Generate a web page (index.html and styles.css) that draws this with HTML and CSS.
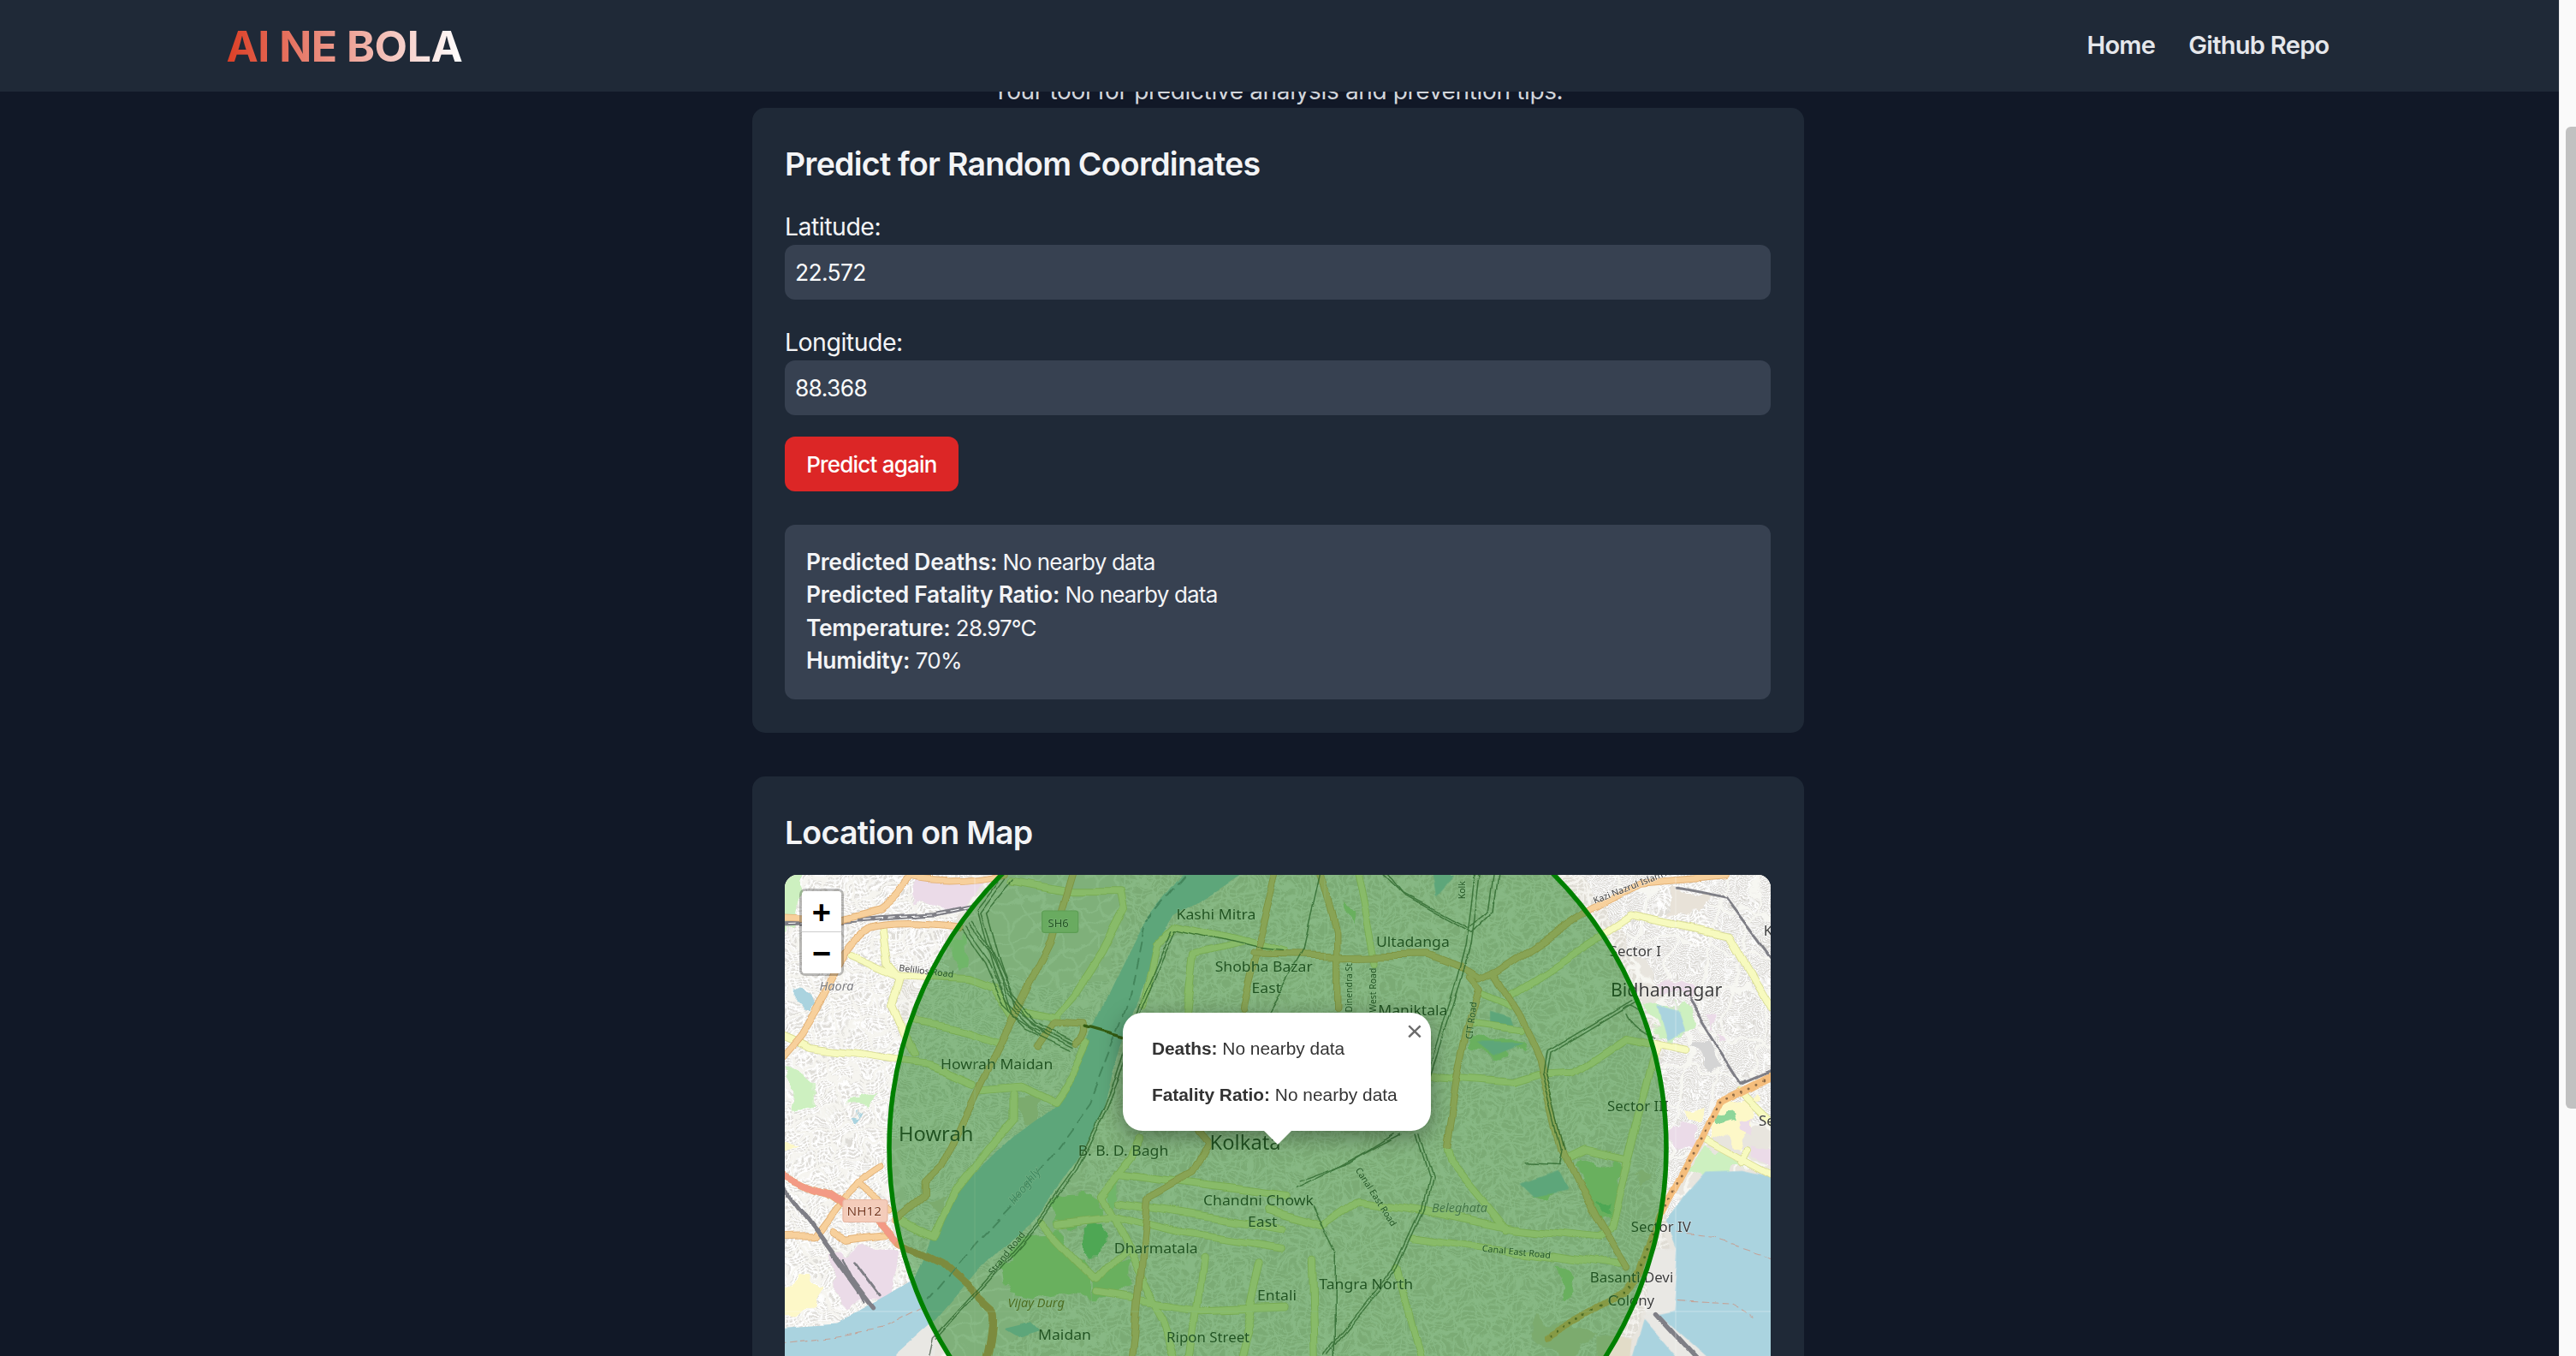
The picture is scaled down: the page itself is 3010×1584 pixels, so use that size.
FILE: index.html
```html
<!DOCTYPE html>
<html lang="en">
<head>
<meta charset="utf-8">
<title>AI NE BOLA</title>
<link rel="stylesheet" href="styles.css">
</head>
<body>
<div class="page">
  <nav class="nav">
    <div class="nav-inner">
      <a class="logo">AI NE BOLA</a>
      <div class="links"><a>Home</a><a>Github Repo</a></div>
    </div>
  </nav>
  <main class="main">
    <p class="subtitle">Your tool for predictive analysis and prevention tips.</p>
    <section class="card">
      <h2>Predict for Random Coordinates</h2>
      <form class="form">
        <label>Latitude:</label>
        <input type="text" value="22.572">
        <label class="second">Longitude:</label>
        <input type="text" value="88.368">
        <button type="button">Predict again</button>
      </form>
      <div class="results">
        <div><strong>Predicted Deaths:</strong> No nearby data</div>
        <div><strong>Predicted Fatality Ratio:</strong> No nearby data</div>
        <div><strong>Temperature:</strong> 28.97°C</div>
        <div><strong>Humidity:</strong> 70%</div>
      </div>
    </section>
    <section class="card">
      <h2>Location on Map</h2>
      <div class="map">
        <svg class="tiles" width="1152" height="800" viewBox="917 1022 1152 800" xmlns="http://www.w3.org/2000/svg">
          <defs>
            <filter id="wob" x="-5%" y="-5%" width="110%" height="110%"><feTurbulence type="fractalNoise" baseFrequency=".03" numOctaves="3" seed="4"/><feDisplacementMap in="SourceGraphic" scale="34" xChannelSelector="R" yChannelSelector="G"/></filter>
            <filter id="wob2" x="-5%" y="-5%" width="110%" height="110%"><feTurbulence type="fractalNoise" baseFrequency=".012" numOctaves="2" seed="9"/><feDisplacementMap in="SourceGraphic" scale="16" xChannelSelector="R" yChannelSelector="G"/></filter>
            <pattern id="st1" width="34" height="24" patternUnits="userSpaceOnUse" patternTransform="rotate(-18)"><rect width="34" height="24" fill="#dedcd7"/><path d="M0 4H34M0 16H34M9 0V24M26 0V24" stroke="#fff" stroke-width="5" fill="none"/></pattern>
            <pattern id="st2" width="28" height="20" patternUnits="userSpaceOnUse" patternTransform="rotate(12)"><rect width="28" height="20" fill="#dddbd4"/><path d="M0 5H28M0 15H28M14 0V20" stroke="#f8f8f5" stroke-width="4" fill="none"/></pattern>
            <pattern id="st3" width="60" height="14" patternUnits="userSpaceOnUse" patternTransform="rotate(14)"><rect width="60" height="14" fill="#d8d6d1"/><path d="M0 3H60M0 10H60M30 0V14" stroke="#fff" stroke-width="3.5" fill="none"/></pattern>
            <pattern id="st4" width="46" height="34" patternUnits="userSpaceOnUse" patternTransform="rotate(8)"><rect width="46" height="34" fill="#e0ddd5"/><path d="M0 8H46M0 26H46M14 0V34M36 0V34" stroke="#f8f7f3" stroke-width="4" fill="none"/></pattern>
            <pattern id="st5" width="150" height="104" patternUnits="userSpaceOnUse" patternTransform="rotate(-24)"><path d="M0 20H150M0 72H150M40 0V104M112 0V104" stroke="#f6f5f0" stroke-width="8" fill="none"/></pattern>
            <pattern id="st6" width="210" height="130" patternUnits="userSpaceOnUse" patternTransform="rotate(11)"><path d="M0 30H210M70 0V130M170 0V130" stroke="#f7f7f2" stroke-width="10" fill="none"/></pattern>
            <g id="primary4">
              <path d="M-60 188 L220 200 L340 170 Q400 130 430 66 Q560 95 720 58"/>
              <path d="M570 225 Q400 200 300 225 Q260 250 230 300 L160 440 L90 560 L-60 740"/>
              <path d="M-60 1195 L130 1190 L175 1130 L225 1060 Q280 1000 330 970"/>
              <path d="M270 1030 L370 1110 M185 1170 L230 1200 L360 1185"/>
              <path d="M930 20 L860 260 L740 510 L640 720 L520 980 L470 1030 L470 1070 L390 1140"/>
              <path d="M820 600 L870 525 L965 530 Q975 570 940 590"/>
              <path d="M1550 20 L1440 480"/>
              <path d="M1300 850 L1340 900 L1290 1000 L1150 1080 L1130 1300 L1090 1700"/>
            </g>
            <g id="secondary4">
              <path d="M345 225 L360 330 L400 380 L375 470 L410 560 L440 620"/>
              <path d="M250 305 L390 370 L600 380 L680 410 L740 510"/>
              <path d="M-60 520 L120 600 L280 620 L400 640 L480 650 L620 710"/>
              <path d="M440 515 L600 550 L700 585 M780 490 L880 510"/>
              <path d="M740 80 L920 115 L1070 115 L1080 170 L1010 310 L930 440 L880 500"/>
              <path d="M750 740 L750 820 L700 880 L560 1060 L500 1190 L400 1140"/>
              <path d="M640 730 L770 720 L870 770 L930 680 L970 590"/>
              <path d="M1140 470 L1180 280 L1240 220 L1568 300"/>
              <path d="M1280 480 L1300 310 L1450 270"/>
              <path d="M880 1150 L1040 1130 L1240 1180 L1568 1230"/>
              <path d="M1040 1130 L1010 1070 L1100 950 L1130 880"/>
              <path d="M1040 1130 L1120 1300 L1200 1450 L1270 1700"/>
              <path d="M1060 1000 L1568 1070 M1060 1090 L1568 1170"/>
              <path d="M830 1150 L930 1260 L1000 1330 L1080 1240"/>
              <path d="M1000 1370 L1320 1420 L1568 1410"/>
              <path d="M1320 1260 L1270 1700 M1500 1280 L1400 1700"/>
            </g>
            <g id="primary5">
              <path d="M1350 62 L1090 85 L940 160 L650 360 L600 385 L540 350 L440 310 L160 315 L-100 310"/>
              <path d="M640 365 L720 500 L780 640 L850 920 L950 1130 L1050 1300"/>
              <path d="M570 385 L600 420 L560 560 L530 700 L500 910"/>
              <path d="M100 20 L160 240 L160 480"/>
            </g>
            <g id="secondary5">
              <path d="M690 430 L980 240 L1060 185 L1360 250 L1560 600"/>
              <path d="M600 430 L690 470 M580 530 L720 550"/>
              <path d="M450 690 L700 710 L780 685 L880 680 L1040 570 L1230 610"/>
              <path d="M860 945 L920 915 L1050 945 L1100 770 L1140 600"/>
              <path d="M1050 945 L1000 1170 L960 1200 L700 1170 L420 1110 L230 1080 L120 1160 L-50 1110"/>
              <path d="M400 1200 L1030 1290"/>
              <path d="M500 920 L510 960 L680 1170"/>
              <path d="M225 20 L260 200 L285 330"/>
              <path d="M1290 890 L1560 1040 M1400 730 L1560 890 M1420 920 L1400 960"/>
              <path d="M90 1260 L100 1700 M350 1290 L450 1700"/>
            </g>
          </defs>
          <rect class="land" x="917" y="1022" width="1152" height="800"/>

          <g class="soft">
            <g filter="url(#wob)">
              <g transform="translate(900 1000) scale(.3827 .3724)">
                <path fill="url(#st1)" d="M-80 -40H640L360 900L380 1250L-80 1250Z"/>
                <path fill="url(#st2)" d="M390 400H1080L780 1300L400 1300Z"/>
                <path fill="url(#st4)" d="M1100 -40H1568V1800H500L900 1300Z"/>
                <path fill="url(#st1)" d="M-80 1240H500V1800H-80Z"/>
                <path fill="url(#st5)" d="M-80 -40H1568V1800H-80Z"/>
                <path class="pink" d="M440 70 L680 70 L580 160 L440 150Z"/>
                <path class="pink" d="M180 1250 L320 1220 L400 1260 L360 1400 L220 1400Z"/>
                <path class="park-l" d="M-40 40H110L70 230H-40Z"/>
                <path class="park-l" d="M60 660L130 690L130 780L70 800Z"/>
                <path class="park-l" d="M240 760L330 730L300 800Z"/>
                <path class="pale" d="M-40 860L80 920L-40 980Z"/>
                <path class="pale" d="M-40 1320L160 1340L140 1440L-40 1440Z"/>
                <path class="water" d="M80 430L130 440L110 500L80 480Z"/>
                <path class="water" d="M255 805L280 815L265 840Z"/>
                <path class="park-m" d="M700 1280 L760 1190 L880 1170 L980 1310 L1000 1370 L860 1400 L720 1370Z"/>
                <path class="park-d" d="M950 1170 L1015 1150 L1005 1250 L960 1250Z"/>
                <path class="park-m" d="M860 1070 L960 1060 L1030 1130 L930 1160 L870 1150Z"/>
                <ellipse class="park-l" cx="1040" cy="1060" rx="25" ry="45"/>
                <path class="park-m" d="M1000 1310L1090 1280L1085 1370L1000 1370Z"/>
                <path class="park-l" d="M560 280L600 260L600 340L570 350Z"/>
                <path class="sand" d="M760 760L860 760L810 850L760 840Z"/>
                <path class="sand" d="M490 1080L540 1070L520 1130Z"/>
              </g>
              <g transform="translate(1500 1000) scale(.3827 .3724)">
                <path fill="url(#st4)" d="M0 -40H920L1170 600L1150 1400L800 1800H0Z"/>
                <path fill="url(#st5)" d="M0 -40H1000V1800H0Z"/>
                <path fill="url(#st3)" d="M820 -40H1600V800L1250 900L1190 1150H1140L1150 400Z"/>
                <path fill="url(#st6)" d="M1000 -40H1600V900L1200 1150H1140Z"/>
                <path fill="url(#st1)" d="M1130 40L1300 40L1300 300L1130 200Z"/>
                <path class="beige" d="M1165 115L1300 130L1280 190L1165 170Z"/>
                <path class="pink" d="M1130 375L1270 410L1250 440L1130 410Z"/>
                <path class="pink" d="M1290 490L1330 510L1300 540Z"/>
                <path class="pink" d="M1330 550L1365 570L1340 590Z"/>
                <path class="gray" d="M1235 605L1290 575L1350 650L1290 675Z"/>
                <path class="pale" d="M1320 780L1420 760L1440 840L1390 920L1300 880Z"/>
                <path class="pink" d="M1400 840L1440 830L1430 870Z"/>
                <path class="pink" d="M1420 900L1560 950V1000L1410 945Z"/>
                <path class="park-d" d="M1320 830L1375 815L1385 845L1335 860Z"/>
                <path class="pink" d="M1190 860L1260 850L1240 920L1190 900Z"/>
                <path class="pale" d="M1230 790L1290 770L1270 830L1240 830Z"/>
                <path class="park-l" d="M1110 470L1220 450L1260 550L1150 590Z"/>
                <path class="park-l" d="M1280 900L1400 970L1290 1010L1240 990Z"/>
                <path class="park-m" d="M900 980L1040 950L1000 1160L950 1120Z"/>
                <path class="park-d" d="M950 1090L1000 1060L990 1125Z"/>
                <path class="park-m" d="M760 1060L850 1050L800 1090Z"/>
                <path class="park-m" d="M580 550L730 590L660 630L580 610Z"/>
                <path class="park-m" d="M190 130L230 170L220 210L195 170Z"/>
                <path class="sand" d="M1050 1010L1120 1000L1100 1060Z"/>
                <path class="sand" d="M780 1440L960 1490L830 1600L760 1520Z"/>
                <path class="park-m" d="M840 1310L900 1320L860 1380Z"/>
              </g>
            </g>
            <g filter="url(#wob2)">
              <g transform="translate(900 1000) scale(.3827 .3724)">
                <path class="water" d="M1290 20 L1130 230 L1040 420 L990 540 L930 700 L860 790 L740 880 L600 1020 L500 1170 L440 1330 L360 1380 L200 1470 L-80 1490 L-80 1800 L470 1800 L500 1460 L640 1290 L700 1230 L830 1120 L940 960 L1020 800 L1075 600 L1120 470 L1170 300 L1240 180 L1480 20Z"/>
                <path class="water" d="M710 1480L790 1460L820 1490L760 1510Z"/>
                <path class="built" d="M380 1568L520 1440L480 1800L370 1800Z"/>
              </g>
              <g transform="translate(1500 1000) scale(.3827 .3724)">
                <path class="built" d="M1120 1240H1215L1195 1430L1100 1440Z"/>
                <path class="water" d="M1600 1030L1400 985L1290 990L1230 1060L1170 1150L1205 1240L1190 1420L1100 1440L1000 1800L1600 1800Z"/>
                <path class="built" d="M1090 1440L1130 1425L1300 1580L1240 1620Z"/>
                <path class="sand" d="M960 1520L1060 1520L1050 1620L960 1620Z"/>
                <path class="water" d="M720 1020L830 980L860 1040L760 1060Z"/>
                <path class="water" d="M590 590L730 590L640 630Z"/>
                <path class="water" d="M630 490L690 510L700 540L630 530Z"/>
                <path class="water" d="M450 60L520 60L460 130Z"/>
                <path class="water" d="M1140 470L1210 490L1230 550L1170 580Z"/>
              </g>
            </g>
            <g filter="url(#wob2)">
              <g transform="translate(900 1000) scale(.3827 .3724)">
                <path class="rail-gray" d="M-60 215 L220 205 L340 195 L500 185 L610 160"/>
                <path class="rail-dash" d="M-60 215 L220 205 L340 195 L500 185 L610 160"/>
                <use href="#secondary4" class="road-case-y"/>
                <use href="#secondary4" class="road-secondary"/>
                <use href="#primary4" class="road-case"/>
                <use href="#primary4" class="road-primary"/>
                <path class="road-case" d="M-60 930 Q90 1030 170 1050 L220 1085 M330 1130 L400 1210 L520 1270 L680 1420 Q700 1460 640 1700"/>
                <path class="road-trunk" d="M-60 930 Q90 1030 170 1050 L220 1085 M330 1130 L400 1210"/>
                <path class="road-trunk2" d="M400 1210 L520 1270 L680 1420 Q700 1460 640 1700"/>
                <path class="bridge" d="M970 540 L1090 575"/>
                <g class="rail">
                  <path d="M590 220 L660 320 L720 460 L790 530 L930 600"/>
                  <path d="M600 210 L670 300 L730 440 L800 525 L930 590"/>
                  <path d="M580 230 L650 330 L710 470 L780 540 L920 610"/>
                  <path d="M610 205 L680 300 L740 440 L810 520 L930 580"/>
                  <path d="M720 70 L640 180 L690 340 L740 500 L830 560"/>
                  <path d="M745 75 L660 180 L700 330 L750 480 L850 560"/>
                  <path d="M700 80 L630 170 L680 350 L730 490"/>
                  <path d="M1230 230 L1130 470 L1060 700 L1020 800 L930 990 L830 1130 L660 1330 L500 1510 L460 1700"/>
                  <path d="M1240 230 L1140 470 L1070 700 L1030 800 L940 990 L840 1130 L670 1330 L510 1510"/>
                  <path d="M1240 230 L1480 290 L1568 300"/>
                </g>
                <path class="rail-gray" d="M-60 900 L140 1170 L260 1340 L320 1420"/>
                <path class="rail-gray thin" d="M220 1260L290 1400 M260 1270L340 1380 M180 1240L270 1370"/>
                <path class="ferry" d="M1270 60 L1140 220 L1090 480 L1040 620 L980 780 L860 950 L740 1090 L620 1220 L480 1390"/>
                <path class="ferry-red" d="M-40 1535 L200 1510 L360 1480 L470 1420"/>
              </g>
              <g transform="translate(1500 1000) scale(.3827 .3724)">
                <use href="#secondary5" class="road-case-y"/>
                <use href="#secondary5" class="road-secondary"/>
                <use href="#primary5" class="road-case"/>
                <use href="#primary5" class="road-primary"/>
                <path class="rail-gray thin" d="M1240 450 L1400 710 L1560 640"/>
                <path class="rail-gray thin" d="M1200 100 L1350 130 L1560 420"/>
                <path class="rail-gray" d="M1130 1430L1300 1620"/>
                <path class="ferry-red" d="M1205 1190L1330 1205L1560 1280M1200 1390L1370 1400L1440 1440"/>
                <path class="road-primary wide" d="M1560 650 L1330 770 L1270 900 L1150 1130 L1090 1310 L1040 1370 L800 1510"/>
                <path class="dotline" d="M1560 650 L1330 770 L1270 900 L1150 1130 L1090 1310 L1040 1370 L800 1510"/>
                <g class="rail">
                  <path d="M600 20 L570 280 L540 400 L450 690"/>
                  <path d="M585 20 L555 280 L525 400 L440 690"/>
                  <path d="M660 20 L640 170 L570 240 L380 130 L290 40"/>
                  <path d="M645 20 L625 170 L560 225 L370 120 L310 40"/>
                  <path d="M1060 450 L800 610 L790 680 L850 920 L840 960 L740 955"/>
                  <path d="M1070 455 L810 615 L800 680 L860 920"/>
                  <path d="M1040 490 Q1060 540 1130 570 M1030 480 Q1060 440 1100 510"/>
                  <path d="M400 870 L440 1010 L420 1110 L340 1290 L130 1560"/>
                  <path d="M410 870 L450 1010 L430 1110 L350 1290 L140 1560"/>
                  <path d="M340 870 L200 960 L40 1020"/>
                  <path d="M360 870 L210 950 L30 1040"/>
                  <path d="M90 1100 L160 1250 L160 1600"/>
                  <path d="M120 20 L60 300 L-50 500"/>
                </g>
              </g>
            </g>
            <g transform="translate(900 1000) scale(.3827 .3724)">
              <g class="label">
                <rect class="shield" x="830" y="172" width="110" height="68" rx="8"/>
                <text x="848" y="222" class="s34">SH6</text>
                <text x="392" y="360" class="s28" transform="rotate(7 392 360)">Belilios Road</text>
                <text x="1240" y="200" class="s44">Kashi Mitra</text>
                <text x="1358" y="362" class="s44">Shobha Bazar</text>
                <text x="1470" y="430" class="s44">East</text>
                <text x="520" y="668" class="s44">Howrah Maidan</text>
                <text x="392" y="895" class="s60">Howrah</text>
                <text x="940" y="940" class="s44">B. B. D. Bagh</text>
                <text x="1342" y="922" class="s60">Kolkata</text>
                <text x="1322" y="1095" class="s44">Chandni Chowk</text>
                <text x="1458" y="1162" class="s44">East</text>
                <text x="1050" y="1245" class="s44">Dharmatala</text>
                <text x="818" y="1518" class="s44">Maidan</text>
                <text x="1210" y="1525" class="s42">Ripon Street</text>
                <text x="1487" y="1395" class="s44">Entali</text>
                <text x="680" y="1315" class="s28" transform="rotate(-52 680 1315)">Strand Road</text>
                <rect class="shield-red" x="222" y="1078" width="136" height="70" rx="8"/>
                <text x="234" y="1128" class="s38 brown">NH12</text>
              </g>
              <text x="150" y="422" class="it haora">Haora</text>
              <text x="745" y="1095" class="it river" transform="rotate(-52 745 1095)">Hooghly</text>
              <text x="725" y="1415" class="it durg">Vijay Durg</text>
            </g>
            <g transform="translate(1500 1000) scale(.3827 .3724)">
              <g class="label">
                <text x="282" y="285" class="s44">Ultadanga</text>
                <text x="288" y="500" class="s44">Maniktala</text>
                <text x="995" y="315" class="s42">Sector I</text>
                <text x="998" y="440" class="s54">Bidhannagar</text>
                <text x="988" y="800" class="s42">Sector III</text>
                <text x="1060" y="1180" class="s42">Sector IV</text>
                <text x="935" y="1338" class="s42">Basanti Devi</text>
                <text x="990" y="1410" class="s42">Colony</text>
                <text x="108" y="1358" class="s44">Tangra North</text>
                <text x="1465" y="250" class="s42">K</text>
                <text x="1450" y="845" class="s42">Se</text>
                <text x="555" y="135" class="s28" transform="rotate(-90 555 135)">Kolk</text>
                <text x="210" y="490" class="s28" transform="rotate(-90 210 490)">Dinendra St</text>
                <text x="282" y="490" class="s28" transform="rotate(-90 282 490)">West Road</text>
                <text x="575" y="575" class="s28" transform="rotate(-83 575 575)">CIT Road</text>
                <text x="605" y="1240" class="s28" transform="rotate(6 605 1240)">Canal East Road</text>
                <text x="218" y="985" class="s28" transform="rotate(58 218 985)">Canal East Road</text>
                <text x="950" y="150" class="s28" transform="rotate(-22 950 150)">Kazi Nazrul Islam Avenue</text>
              </g>
              <text x="452" y="1118" class="it haora">Beleghata</text>
            </g>
          </g>

          <path class="seam" d="M1139 1022V1584M1548 1022V1584M1958 1022V1584M917 1532H2069"/>
          <circle class="zone" cx="1493" cy="1341" r="454"/>
        </svg>
        <div class="zoom-ctl">
          <a class="zoom-btn">+</a>
          <a class="zoom-btn">−</a>
        </div>
        <div class="popup">
          <span class="popup-close">×</span>
          <p><b>Deaths:</b> No nearby data</p>
          <p><b>Fatality Ratio:</b> No nearby data</p>
          <span class="popup-tip"></span>
        </div>
      </div>
    </section>
  </main>
</div>
<aside class="rail-bar"><span class="thumb"></span></aside>
</body>
</html>
```
FILE: styles.css
```css
* { box-sizing: border-box; }
html, body { margin: 0; height: 100%; }
body {
  display: flex;
  overflow: hidden;
  background: #111827;
  font-family: Inter, "Liberation Sans", sans-serif;
  color: #f3f4f6;
}
.page { flex: 1; min-width: 0; height: 100vh; overflow: hidden; }
.rail-bar { width: 20px; height: 100vh; background: #fafafa; border-left: 1px solid #ececec; padding: 148px 0 0 7px; }
.thumb { display: block; width: 12px; height: 1147px; border-radius: 6px 0 0 6px; background: #c1c1c1; }

.nav { position: relative; z-index: 10; height: 107px; background: #1f2937; padding-right: 4px; }
.nav-inner { width: 2457px; height: 100%; margin: 0 auto; display: flex; align-items: center; justify-content: space-between; }
.logo {
  font-size: 50px; font-weight: 700; letter-spacing: -.5px;
  background: linear-gradient(90deg, #dc3f26 0%, #ffffff 100%);
  -webkit-background-clip: text; background-clip: text; color: transparent;
}
.links { display: flex; gap: 39px; padding-bottom: 2px; font-size: 29px; font-weight: 600; letter-spacing: -.7px; color: #e5e7eb; }

.main { display: flex; flex-direction: column; align-items: center; margin-top: -21px; padding-right: 4px; }
.subtitle { margin: 0; height: 40px; line-height: 40px; font-size: 28px; letter-spacing: -.35px; color: #d1d5db; }
.card { width: 1229px; padding: 39px 38.4px; margin-bottom: 51px; background: #1f2937; border-radius: 15px; }
h2 { margin: 0 0 22px; font-size: 37.5px; line-height: 54px; font-weight: 600; letter-spacing: -.75px; color: #f3f4f6; }
.form { display: flex; flex-direction: column; align-items: flex-start; padding-top: 4px; }
label { height: 38px; line-height: 39px; font-size: 28.5px; letter-spacing: -.5px; margin-bottom: 3px; color: #f3f4f6; }
label.second { margin-top: 30px; }
input {
  width: 100%; height: 64px; padding: 0 12px; border: 0; border-radius: 12px;
  background: #374151; color: #f9fafb; font: 400 26.4px Inter, sans-serif; letter-spacing: -.6px;
}
button {
  margin-top: 25px; height: 64px; width: 203px; border: 0; border-radius: 12px;
  background: #dc2626; color: #fff; font: 500 26px Inter, sans-serif; letter-spacing: -.8px;
}
.results { margin-top: 39px; padding: 25px; background: #374151; border-radius: 12px; font-size: 26px; letter-spacing: -.8px; line-height: 38.4px; color: #f3f4f6; }
.results div { height: 38.4px; }
.results strong { font-weight: 600; font-size: 26.4px; line-height: 1; letter-spacing: -.26px; }

.map { position: relative; height: 800px; border-radius: 15px; overflow: hidden; background: #f2efe9; }
.tiles { display: block; }
.soft { filter: blur(.7px); }
.land { fill: #e8e5de; }
.pink { fill: #ebdbe8; }
.park-l { fill: #cdf0c0; }
.park-m { fill: #bfe5ab; }
.park-d { fill: #8ed69a; }
.pale { fill: #fdf8c8; }
.water { fill: #aad3df; }
.sand { fill: #e2dcc8; }
.beige { fill: #e8e2d8; }
.gray { fill: #d4d4d4; }
.built { fill: #e9e8e4; }
.road-case, .road-case-y, .road-primary, .road-secondary, .road-trunk, .road-trunk2, .rail, .rail-gray, .rail-dash, .bridge, .ferry, .ferry-red, .dotline { fill: none; stroke-linejoin: round; stroke-linecap: round; }
.road-case { stroke: #e3b277; stroke-width: 22; }
.road-primary { stroke: #f7d09c; stroke-width: 17; }
.road-primary.wide { stroke: #f4bd7c; stroke-width: 22; }
.road-case-y { stroke: #dadd96; stroke-width: 24; }
.road-secondary { stroke: #f7fabf; stroke-width: 19; }
.road-trunk { stroke: #f39a85; stroke-width: 20; }
.road-trunk2 { stroke: #e2a271; stroke-width: 20; }
.bridge { stroke: #605020; stroke-width: 9; }
.rail { stroke: #4a5a4a; stroke-width: 4; opacity: .75; }
.rail-gray { stroke: #7f7f86; stroke-width: 14; }
.rail-gray.thin { stroke-width: 8; }
.rail-dash { stroke: #fff; stroke-width: 3; stroke-dasharray: 22 16; }
.ferry { stroke: #7a99a6; stroke-width: 5; stroke-dasharray: 30 22; }
.ferry-red { stroke: #c2a49a; stroke-width: 3; stroke-dasharray: 20 14; }
.dotline { stroke: #8d6a45; stroke-width: 8; stroke-dasharray: 0 26; }
.label text, .it {
  font-family: "Noto Sans", "DejaVu Sans", sans-serif;
  fill: #3d3d3d; stroke: #ffffff; stroke-width: 3; stroke-opacity: .55; paint-order: stroke;
}
.s28 { font-size: 28px; }
.s34 { font-size: 34px; }
.s38 { font-size: 40px; }
.s42 { font-size: 44px; }
.s44 { font-size: 46px; }
.s54 { font-size: 56px; }
.s60 { font-size: 62px; }
.label text.brown { fill: #7a3a20; }
.it { font-style: italic; font-size: 38px; }
.it.haora { fill: #7d7d80; }
.it.river { fill: #6f9cb0; font-size: 36px; }
.it.durg { fill: #8a6a3a; }
.shield { fill: #c0dcb0; stroke: #a8c498; stroke-width: 3; }
.shield-red { fill: #f4ccba; stroke: #e8b8a4; stroke-width: 3; }
.seam { stroke: #fff; stroke-width: 1; opacity: .35; fill: none; }
.zone { fill: #006e00; fill-opacity: .45; stroke: #008000; stroke-width: 5.5; }

.zoom-ctl { position: absolute; left: 17px; top: 16px; width: 52px; border: 3px solid rgba(0,0,0,.25); border-radius: 7px; background-clip: padding-box; display: flex; flex-direction: column; }
.zoom-btn {
  display: flex; align-items: center; justify-content: center; height: 48px; padding-top: 4px;
  background: #fff; color: #000; font: 700 38px "Liberation Sans", sans-serif;
}
.zoom-btn:first-child { border-bottom: 1px solid #ccc; border-radius: 4px 4px 0 0; }
.zoom-btn:last-child { border-radius: 0 0 4px 4px; }

.popup {
  position: absolute; left: 395px; top: 161px; width: 360px; height: 138px;
  padding: 27px 34px; background: #fff; border-radius: 23px;
  box-shadow: 0 6px 26px rgba(0,0,0,.4);
  font: 400 20.9px/30px "Liberation Sans", Arial, sans-serif; color: #333;
}
.popup p { margin: 0 0 24px; white-space: nowrap; }
.popup-close { position: absolute; right: 6px; top: 3px; width: 26px; height: 36px; text-align: center; font: 400 34px/36px "Liberation Sans", sans-serif; color: #6b6b6b; }
.popup-tip { position: absolute; left: 165px; top: 138px; width: 0; height: 0; border-left: 16px solid transparent; border-right: 16px solid transparent; border-top: 16px solid #fff; }
```
